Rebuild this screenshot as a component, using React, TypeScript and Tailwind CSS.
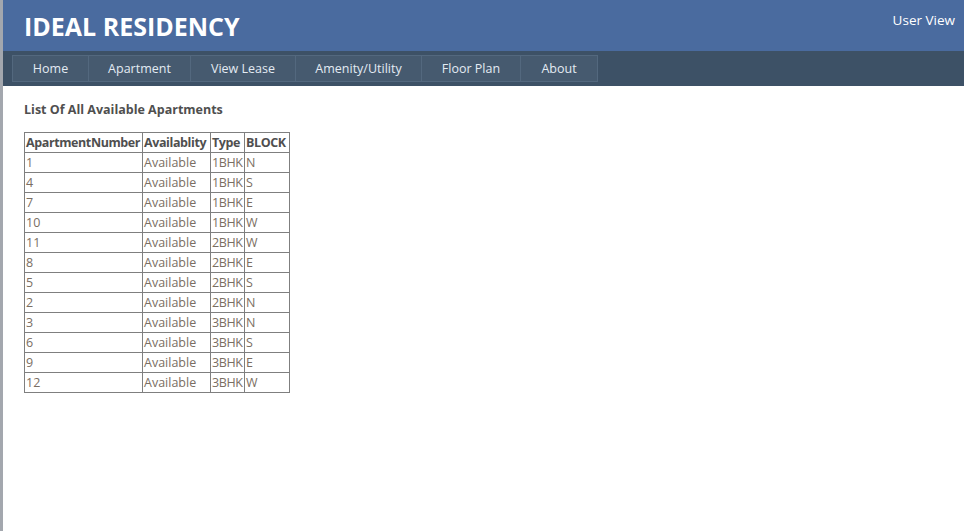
const navItems = [
	{ label: "Home", w: "w-[77px]" },
	{ label: "Apartment", w: "w-[103px]" },
	{ label: "View Lease", w: "w-[106px]" },
	{ label: "Amenity/Utility", w: "w-[127px]" },
	{ label: "Floor Plan", w: "w-[100px]" },
	{ label: "About", w: "w-[78px]" },
];

const apartments = [
	["1", "1BHK", "N"],
	["4", "1BHK", "S"],
	["7", "1BHK", "E"],
	["10", "1BHK", "W"],
	["11", "2BHK", "W"],
	["8", "2BHK", "E"],
	["5", "2BHK", "S"],
	["2", "2BHK", "N"],
	["3", "3BHK", "N"],
	["6", "3BHK", "S"],
	["9", "3BHK", "E"],
	["12", "3BHK", "W"],
];

export default function App() {
	return (
		<div className="w-[964px] h-[531px] flex bg-white overflow-hidden font-['Open_Sans',sans-serif]">
			<div className="w-[3px] h-full bg-[#a3a7ae]" />
			<div className="flex-1 flex flex-col">
				<header className="h-[51px] bg-[#4a6b9f] flex items-start justify-between pl-[21px] pr-[9px]">
					<h1 className="text-[25px] leading-none font-bold text-white mt-[14px]">
						IDEAL RESIDENCY
					</h1>
					<span className="text-[13.5px] text-white mt-[10px]">User View</span>
				</header>
				<nav className="h-[35px] bg-[#3d5166] pl-[9px] pt-[4px]">
					<ul className="flex">
						{navItems.map((item) => (
							<li
								key={item.label}
								className={`${item.w} h-[27px] bg-[#465a6f] border border-[#53687e] -ml-px first:ml-0 flex items-center justify-center pt-[2px] text-[12.5px] text-[#e3ebf3]`}>
								{item.label}
							</li>
						))}
					</ul>
				</nav>
				<main className="pl-[21px] pt-[15px] text-[#666]">
					<h2 className="text-[12.5px] font-bold text-[#4f4f4f] leading-[18px]">
						List Of All Available Apartments
					</h2>
					<table className="mt-[13px] border-collapse text-[12.5px] leading-[19px]">
						<thead>
							<tr className="text-[#4f4f4f] font-bold">
								<th className="w-[118px] border border-[#7f7f7f] px-px text-left tracking-[-0.4px]">ApartmentNumber</th>
								<th className="w-[68px] border border-[#7f7f7f] px-px text-left tracking-[-0.4px]">Availablity</th>
								<th className="w-[34px] border border-[#7f7f7f] px-px text-left tracking-[-0.4px]">Type</th>
								<th className="w-[45px] border border-[#7f7f7f] px-px text-left tracking-[-0.4px]">BLOCK</th>
							</tr>
						</thead>
						<tbody>
							{apartments.map(([num, type, block]) => (
								<tr key={num} className="text-[#7a6e62]">
									<td className="border border-[#7f7f7f] px-px">{num}</td>
									<td className="border border-[#7f7f7f] px-px">Available</td>
									<td className="border border-[#7f7f7f] px-px tracking-[-0.4px]">{type}</td>
									<td className="border border-[#7f7f7f] px-px">{block}</td>
								</tr>
							))}
						</tbody>
					</table>
				</main>
			</div>
		</div>
	);
}
